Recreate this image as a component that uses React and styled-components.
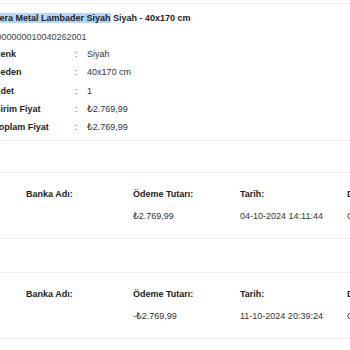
import React from "react";
import styled, { createGlobalStyle } from "styled-components";

const GlobalStyle = createGlobalStyle`
  html, body {
    margin: 0;
    padding: 0;
    background: #fff;
    overflow: hidden;
  }
  body {
    font-family: "Liberation Sans", Arial, "DejaVu Sans", sans-serif;
    font-size: 9px;
    color: #333;
    -webkit-font-smoothing: antialiased;
  }
`;

// the view is scrolled a few pixels to the right, as in the screenshot
const Page = styled.div`
  width: 440px;
  margin-left: -6px;
`;

const ProductSection = styled.section`
  margin-top: 3px;
  border-top: 1px solid #f0f0f0;
  border-bottom: 1px solid #f0f0f0;
  padding: 8px 0 4px;
`;

const Title = styled.h4`
  margin: 0;
  font-size: 9px;
  line-height: 12px;
  font-weight: bold;
  color: #222;
  white-space: nowrap;
`;

const Selected = styled.span`
  background: #b5d5fb;
`;

const Code = styled.div`
  margin-top: 7px;
  line-height: 12px;
  color: #444;
`;

const Details = styled.div`
  margin-top: 2px;
  display: grid;
  grid-template-columns: 81px 12px 1fr;
  grid-auto-rows: 18.3px;
  align-items: center;
`;

const Label = styled.span`
  font-weight: bold;
  color: #222;
`;

const Colon = styled.span`
  color: #444;
`;

const Value = styled.span`
  color: #333;
`;

const Payment = styled.div`
  margin-top: ${(p) => p.$gap}px;
  border-top: 1px solid #f0f0f0;
  border-bottom: 1px solid #f0f0f0;
  padding: 15px 0 16px 32px;
  display: grid;
  grid-template-columns: repeat(4, 107px);
  grid-template-rows: 12px 12px;
  row-gap: 10px;
  line-height: 12px;
  white-space: nowrap;
`;

const Head = styled.span`
  font-weight: bold;
  color: #222;
`;

const Cell = styled.span`
  color: #333;
`;

const details = [
  ["Renk", "Siyah"],
  ["Beden", "40x170 cm"],
  ["Adet", "1"],
  ["Birim Fiyat", "₺2.769,99"],
  ["Toplam Fiyat", "₺2.769,99"],
];

const payments = [
  { amount: "₺2.769,99", date: "04-10-2024 14:11:44", gap: 31 },
  { amount: "-₺2.769,99", date: "11-10-2024 20:39:24", gap: 33 },
];

export default function App() {
  return (
    <>
      <GlobalStyle />
      <Page>
        <ProductSection>
          <Title>
            <Selected>Vera Metal Lambader Siyah</Selected> Siyah - 40x170 cm
          </Title>
          <Code>&nbsp;000000010040262001</Code>
          <Details>
            {details.map(([k, v]) => (
              <React.Fragment key={k}>
                <Label>{k}</Label>
                <Colon>:</Colon>
                <Value>{v}</Value>
              </React.Fragment>
            ))}
          </Details>
        </ProductSection>
        {payments.map((p) => (
          <Payment key={p.date} $gap={p.gap}>
            <Head>Banka Adı:</Head>
            <Head>Ödeme Tutarı:</Head>
            <Head>Tarih:</Head>
            <Head>Durum:</Head>
            <Cell></Cell>
            <Cell>{p.amount}</Cell>
            <Cell>{p.date}</Cell>
            <Cell>Onaylandı</Cell>
          </Payment>
        ))}
      </Page>
    </>
  );
}
